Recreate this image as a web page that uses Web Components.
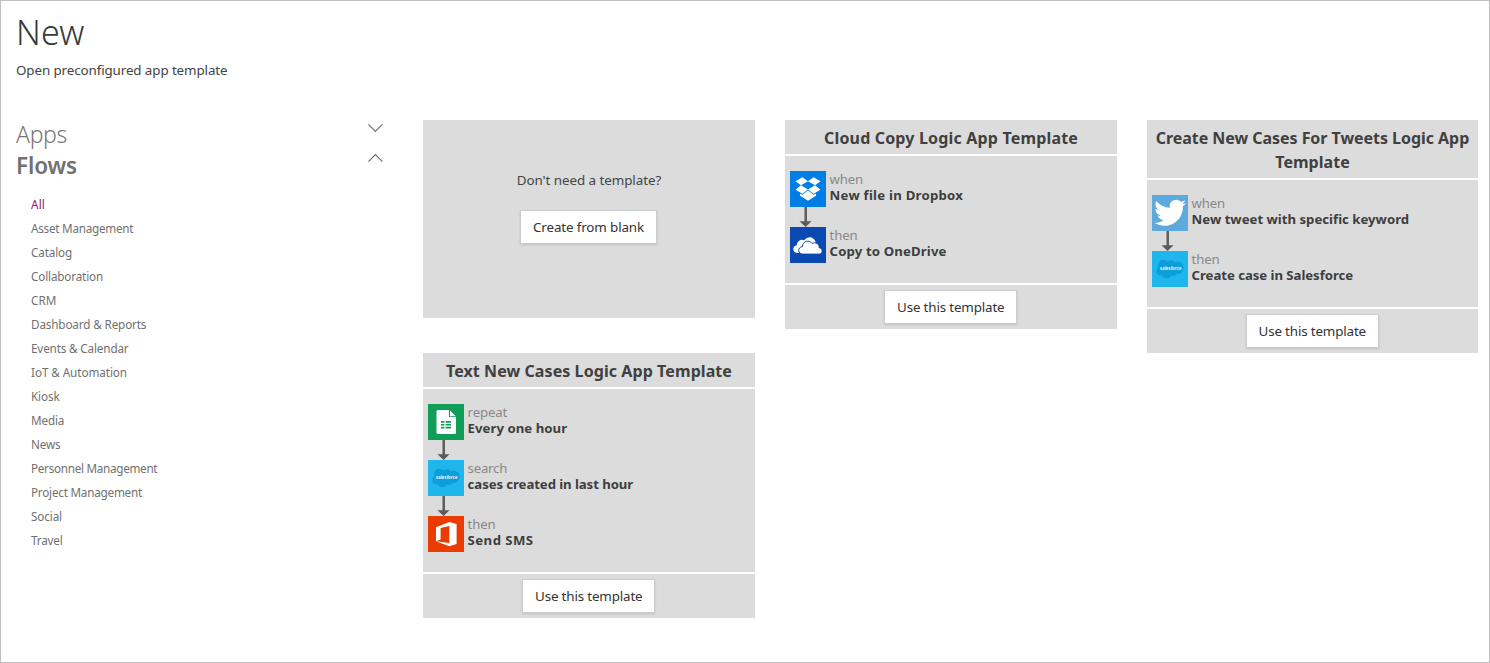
<!DOCTYPE html>
<html lang="en">
<head>
<meta charset="utf-8">
<title>New</title>
<style>
html,body{margin:0;height:100%}
body{font-family:"Noto Sans","Open Sans",sans-serif;background:#fff;color:#444}
</style>
</head>
<body>
<template-gallery></template-gallery>
<script>
const define=(name,html,setup)=>customElements.define(name,class extends HTMLElement{
  connectedCallback(){
    if(this.shadowRoot)return;
    this.attachShadow({mode:'open'}).innerHTML=typeof html==='function'?html(this):html;
    if(setup)setup(this);
  }
});

const sf='<rect width="36" height="36" fill="#1fb7eb"/><path d="M8.2 24.3C4.8 24 4 21.5 4.4 19.2C4.6 17.8 5.4 16.8 6.4 16.3C5.5 12 7.6 8.8 11.2 8.7C13.2 8.6 14.7 9.3 15.8 10.7C17.8 8.5 21.3 8.8 22.8 11.3C27.5 9.5 31.6 12.5 31.6 16.7C31.6 21 28 23.6 24.6 22.7C23.6 24.8 21.3 25.6 19.2 24.6C17.4 28.4 11.4 28.3 9.8 24.2Z" fill="#0d9ddb"/><text x="7.8" y="19.3" textLength="21.5" lengthAdjust="spacingAndGlyphs" font-family="Liberation Sans" font-size="5.4" font-style="italic" font-weight="700" fill="#e9f7fd">salesforce</text>';
const art={
  dropbox:'<rect width="36" height="36" fill="#007ee5"/><g fill="#fff"><path d="M12.4 6.2 18 10.2 11 14.3 5.5 10.3ZM23.6 6.2 30.5 10.3 25 14.3 18 10.2ZM11 14.3 18 18.5 12.4 22.7 5.5 18.7ZM25 14.3 30.5 18.7 23.6 22.7 18 18.5Z"/><path d="M18 19.5 23.6 23.7 26 22.6V24.8L18 29.8 10 24.8V22.6L12.4 23.7Z"/></g>',
  onedrive:'<rect width="36" height="36" fill="#094ab2"/><path d="M8 26C2.1 26 1.8 18.9 6.9 18.2C6.5 14.3 11.1 11.3 14.3 13.3C17.4 8.3 24.6 9.4 25.7 15.6L20 25Z" fill="#fff"/><path d="M13 27.1C7.5 27.2 7.2 20.2 12.4 19.6C12.5 14.4 19.2 12.2 22 16.5C25.7 14.5 29.6 17.1 29.1 20.7C33.4 21.1 33.1 27.1 29 27.1Z" fill="#fff" stroke="#094ab2" stroke-width="1"/>',
  twitter:'<rect width="36" height="36" fill="#5ea9dd"/><path transform="translate(2.2 1.8) scale(1.33)" d="M23.953 4.57a10 10 0 01-2.825.775 4.958 4.958 0 002.163-2.723c-.951.555-2.005.959-3.127 1.184a4.92 4.92 0 00-8.384 4.482C7.69 8.095 4.067 6.13 1.64 3.162a4.822 4.822 0 00-.666 2.475c0 1.71.87 3.213 2.188 4.096a4.904 4.904 0 01-2.228-.616v.06a4.923 4.923 0 003.946 4.827 4.996 4.996 0 01-2.212.085 4.936 4.936 0 004.604 3.417 9.867 9.867 0 01-6.102 2.105c-.39 0-.779-.023-1.17-.067a13.995 13.995 0 007.557 2.209c9.053 0 13.998-7.496 13.998-13.985 0-.21 0-.42-.015-.63A9.935 9.935 0 0024 4.59z" fill="#fff"/>',
  salesforce:sf,
  sheets:'<rect width="36" height="36" fill="#109d58"/><path d="M10 6H21L28 13V28.5Q28 30 26.5 30H10Q8.5 30 8.5 28.5V7.5Q8.5 6 10 6Z" fill="#fff"/><path d="M21 5.5V13H28.5V5.5Z" fill="#109d58"/><path d="M22 6.4 27.8 12.2H22Z" fill="#fff"/><path d="M13 17h3.4v1.8H13zM17.6 17H23v1.8H17.6zM13 20h3.4v1.6H13zM17.6 20H23v1.6H17.6zM13 22.8h3.4v1.6H13zM17.6 22.8H23v1.6H17.6z" fill="#109d58"/>',
  office:'<rect width="36" height="36" fill="#eb3c00"/><path d="M8 11.2 21.3 6 28.6 8.1V28.1L21.3 30.3 8 25.3 21.3 26.9V9.9L12.6 12V23.4L8 25.3Z" fill="#fff"/>'
};

define('app-icon',el=>`<style>:host{display:block;width:36px;height:36px;flex:none}svg{display:block}</style><svg width="36" height="36" viewBox="0 0 36 36">${art[el.getAttribute('name')]}</svg>`);

define('flow-arrow','<style>:host{display:block;height:20px}svg{display:block}</style><svg width="36" height="20"><path d="M14 0h1v15h-1z" fill="#999"/><path d="M15 0h2v15h-2z" fill="#5f5f5f"/><path d="M9.5 14.2h12L15.6 20Z" fill="#5a5a5a"/></svg>');

define('flow-step',`<style>
:host{display:flex;gap:3.6px;height:36px}
.t{font-size:13.2px;line-height:16px;color:#888}
b{display:block;font-weight:700;color:#3e3e3e}
</style><slot name="icon"></slot><div class="t"><slot name="verb"></slot><b><slot></slot></b></div>`);

define('plain-button',`<style>
:host{display:inline-block}
button{display:block;font:13.4px/32px "Noto Sans","Open Sans",sans-serif;color:#333;height:34px;border:1px solid #ccc;background:#fff;padding:0 12px;margin:0;box-shadow:0 1px 2px rgba(0,0,0,.12);width:100%}
</style><button><slot></slot></button>`);

define('template-card',`<style>
:host{display:flex;flex-direction:column;gap:2px}
header,section,footer{background:#dcdcdc}
header{padding:6px 4px 4px;text-align:center;font-size:16px;line-height:24px;font-weight:700;color:#404040}
section{padding:15px 5px 20px}
footer{padding:5px 1px 5px 0;display:flex;justify-content:center}
plain-button{width:133px}
</style>
<header><slot name="title"></slot></header>
<section><slot></slot></section>
<footer><plain-button><fit-text w="107.5">Use this template</fit-text></plain-button></footer>`);

define('blank-card',`<style>
:host{display:flex;flex-direction:column;align-items:center;background:#dcdcdc;height:148px;padding-top:50px;font-size:13.4px;line-height:20px;color:#444}
plain-button{width:137px;margin:20px 1px 0 0}
</style><fit-text w="144.5">Don't need a template?</fit-text><plain-button><fit-text w="111">Create from blank</fit-text></plain-button>`);

define('nav-group',el=>`<style>
:host{display:flex;justify-content:space-between;height:31px;font-size:23px;line-height:29px;color:#777;font-weight:300}
:host([open]){font-weight:600;font-size:22.5px;color:#717171}
svg{margin:3px 0 0}
:host([open]) svg{margin-top:2px}
</style><slot></slot><svg width="16" height="10" fill="none" stroke="#707070" stroke-width="1.2"><path d="${el.hasAttribute('open')?'M1.4 8.7 8.4 1.7 15.4 8.7':'M1.4 1.3 8.4 8.3 15.4 1.3'}"/></svg>`);

const items=[['All',14],['Asset Management',102.3],['Catalog',41],['Collaboration',72],['CRM',25.5],['Dashboard &amp; Reports',115.3],['Events &amp; Calendar',97.5],['IoT &amp; Automation',96],['Kiosk',28.5],['Media',33.2],['News',29.5],['Personnel Management',126.3],['Project Management',111],['Social',31],['Travel',31.5]];
define('side-nav',`<style>
:host{display:block;width:367px}
ul{list-style:none;margin:10px 0 0;padding:0 0 0 15px;font-size:11.7px;line-height:24px;color:#717171}
li{height:24px}li:first-child{color:#91146f}
</style>
<nav-group><fit-text w="51">Apps</fit-text></nav-group>
<nav-group open><fit-text w="61">Flows</fit-text></nav-group>
<ul>${items.map(([t,w])=>`<li><fit-text w="${w}">${t}</fit-text></li>`).join('')}</ul>`);

const step=(icon,verb,vw,text,tw)=>`<flow-step><app-icon slot="icon" name="${icon}"></app-icon><fit-text slot="verb" w="${vw}">${verb}</fit-text><fit-text w="${tw}">${text}</fit-text></flow-step>`;
define('template-gallery',`<style>
:host{display:block;box-sizing:border-box;height:100vh;border:1px solid #bfbfbf;overflow:hidden;padding:9px 11px 0 15px}
h1{margin:0;font-size:34px;line-height:44px;font-weight:300;color:#3a3a3a;height:46px}
p{margin:3px 0 0;font-size:13.4px;line-height:22px;color:#444}
main{display:flex;gap:40px;margin-top:39px}
side-nav{flex:none}
.grid{flex:1;display:grid;grid-template-columns:332px 332px 331px;column-gap:30px;align-items:start;align-content:start}
</style>
<h1><fit-text w="68.5">New</fit-text></h1>
<p><fit-text w="211.5">Open preconfigured app template</fit-text></p>
<main><side-nav></side-nav><div class="grid">
<blank-card></blank-card>
<template-card><fit-text slot="title" w="254">Cloud Copy Logic App Template</fit-text>
${step('dropbox','when',33.5,'New file in Dropbox',133.5)}<flow-arrow></flow-arrow>${step('onedrive','then',28,'Copy to OneDrive',117)}</template-card>
<template-card><fit-text slot="title" w="313.5">Create New Cases For Tweets Logic App</fit-text><fit-text slot="title" w="74.5">Template</fit-text>
${step('twitter','when',33.5,'New tweet with specific keyword',217.5)}<flow-arrow></flow-arrow>${step('salesforce','then',28,'Create case in Salesforce',161.5)}</template-card>
<template-card><fit-text slot="title" w="286">Text New Cases Logic App Template</fit-text>
${step('sheets','repeat',39.5,'Every one hour',99.5)}<flow-arrow></flow-arrow>${step('salesforce','search',39.5,'cases created in last hour',165.5)}<flow-arrow></flow-arrow>${step('office','then',28,'Send SMS',66)}</template-card>
</div></main>`);

/* Tracks its text so that the label spans the width given in "w". */
define('fit-text','<style>:host{display:inline-block;white-space:nowrap;vertical-align:top}</style><span><slot></slot></span>',el=>{
  const s=el.shadowRoot.querySelector('span');
  const n=el.textContent.length;
  s.style.letterSpacing=((+el.getAttribute('w')-s.getBoundingClientRect().width)/n)+'px';
});
</script>
</body>
</html>
